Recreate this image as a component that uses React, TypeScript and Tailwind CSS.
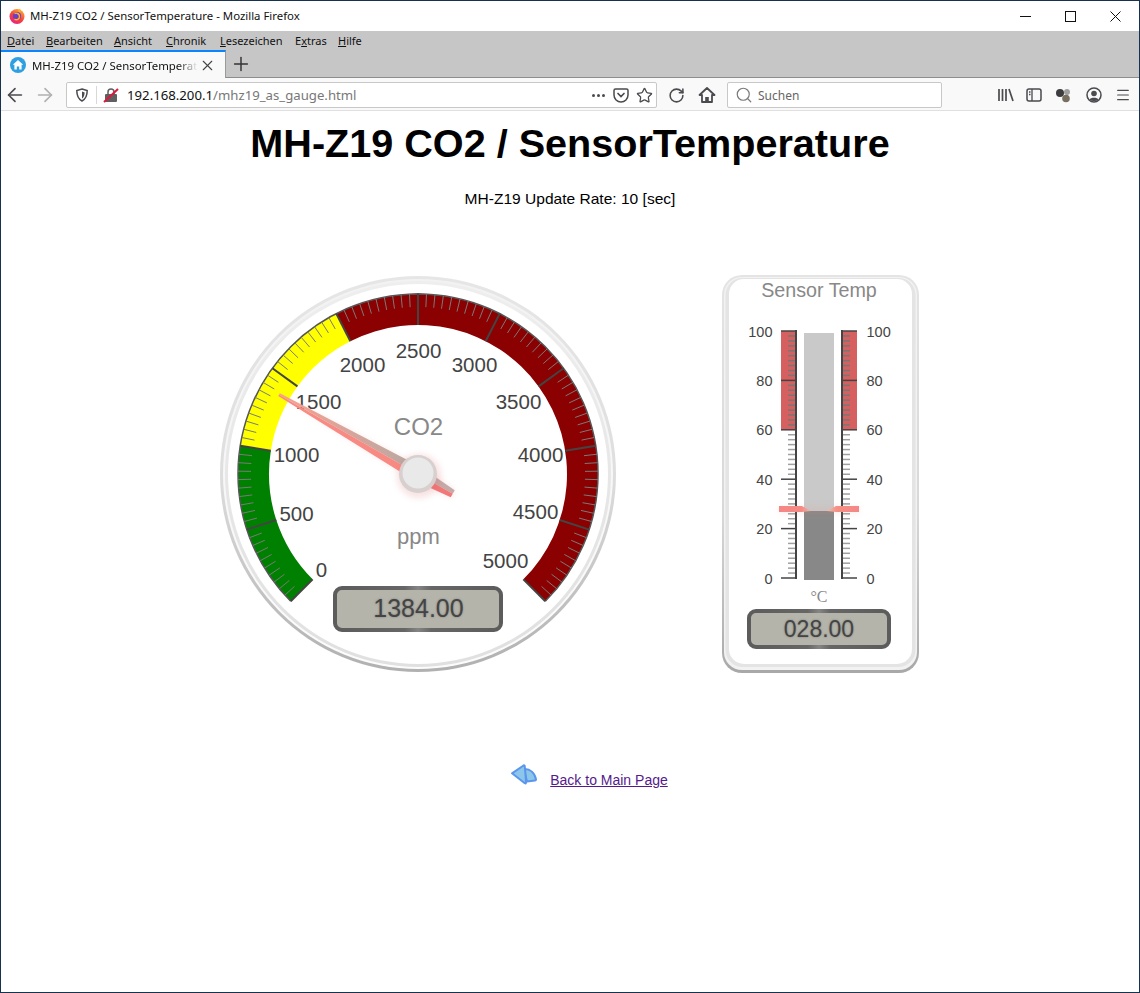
import React from "react";
import { ArrowLeft, ArrowRight, RotateCw, Search, Star, X, Plus, Menu } from "lucide-react";

const SANS = "Liberation Sans, Arial, sans-serif";
const CX = 418;
const CY = 474;

function polar(value: number, r: number) {
  const a = ((45 + (value / 5000) * 270) * Math.PI) / 180;
  return [CX - r * Math.sin(a), CY + r * Math.cos(a)];
}

function arc(from: number, to: number, r1: number, r2: number) {
  const [ax, ay] = polar(from, r1);
  const [bx, by] = polar(to, r1);
  const [cx, cy] = polar(to, r2);
  const [dx, dy] = polar(from, r2);
  const large = ((to - from) / 5000) * 270 > 180 ? 1 : 0;
  return `M${ax} ${ay}A${r1} ${r1} 0 ${large} 1 ${bx} ${by}L${cx} ${cy}A${r2} ${r2} 0 ${large} 0 ${dx} ${dy}Z`;
}

const labels: [string, number, number][] = [
  ["0", 321.5, 570],
  ["500", 296.5, 514],
  ["1000", 296.5, 454.5],
  ["1500", 318.5, 401.5],
  ["2000", 362.5, 364.5],
  ["2500", 418.5, 350.5],
  ["3000", 474.5, 364.5],
  ["3500", 518.5, 401.5],
  ["4000", 540.5, 454.5],
  ["4500", 535.5, 511.5],
  ["5000", 505.5, 560.5],
];

function Gauge() {
  const ticks = Array.from({ length: 101 }, (_, i) => i * 50);
  const a = ((45 + (1384 / 5000) * 270) * Math.PI) / 180;
  const ux = -Math.sin(a);
  const uy = Math.cos(a);
  const nx = -uy;
  const ny = ux;
  const pt = (along: number, side: number) =>
    `${CX + ux * along + nx * side},${CY + uy * along + ny * side}`;
  return (
    <svg width={400} height={400} viewBox="218 274 400 400" fontFamily={SANS} className="block shrink-0">
      <defs>
        <linearGradient id="ringA" x1="0" y1="0" x2="0" y2="1">
          <stop offset="0" stopColor="#e6e6e6" />
          <stop offset="0.5" stopColor="#dedede" />
          <stop offset="1" stopColor="#b0b0b0" />
        </linearGradient>
        <linearGradient id="ringB" x1="0" y1="0" x2="0" y2="1">
          <stop offset="0" stopColor="#f2f2f2" />
          <stop offset="1" stopColor="#fcfcfc" />
        </linearGradient>
        <linearGradient id="ringC" x1="0" y1="0" x2="0" y2="1">
          <stop offset="0" stopColor="#eeeeee" />
          <stop offset="1" stopColor="#e0e0e0" />
        </linearGradient>
        <linearGradient id="needleTop" x1="279" y1="396" x2="405" y2="460" gradientUnits="userSpaceOnUse">
          <stop offset="0" stopColor="#f8a090" />
          <stop offset="1" stopColor="#bca9a2" />
        </linearGradient>
        <linearGradient id="lcdFrame" x1="0" y1="0" x2="1" y2="0">
          <stop offset="0" stopColor="#5c5c5c" />
          <stop offset="0.42" stopColor="#666666" />
          <stop offset="0.5" stopColor="#858585" />
          <stop offset="0.58" stopColor="#666666" />
          <stop offset="1" stopColor="#5c5c5c" />
        </linearGradient>
        <filter id="soft" x="-30%" y="-30%" width="160%" height="160%">
          <feGaussianBlur stdDeviation="3" />
        </filter>
        <filter id="softRing" x="-5%" y="-5%" width="110%" height="110%">
          <feGaussianBlur stdDeviation="0.7" />
        </filter>
        <filter id="softText" x="-10%" y="-30%" width="120%" height="160%">
          <feGaussianBlur stdDeviation="1.2" />
        </filter>
      </defs>
      <circle cx={CX} cy={CY} r={198} fill="url(#ringA)" filter="url(#softRing)" />
      <circle cx={CX} cy={CY} r={195} fill="url(#ringB)" filter="url(#softRing)" />
      <circle cx={CX} cy={CY} r={193} fill="url(#ringC)" filter="url(#softRing)" />
      <circle cx={CX} cy={CY} r={190} fill="#ffffff" filter="url(#softRing)" />
      <path d={arc(0, 1000, 180, 149)} fill="#008000" />
      <path d={arc(1000, 2000, 180, 149)} fill="#ffff00" />
      <path d={arc(2000, 5000, 180, 149)} fill="#8b0000" />
      <path d={arc(0, 5000, 180, 180)} fill="none" stroke="#555555" strokeWidth={1.5} />
      {ticks.map((v) => {
        const major = v % 500 === 0;
        const [x1, y1] = polar(v, 180);
        const [x2, y2] = polar(v, major ? 149 : 167);
        return (
          <line
            key={v}
            x1={x1}
            y1={y1}
            x2={x2}
            y2={y2}
            stroke={major ? "#444444" : "#7a7a7a"}
            strokeWidth={major ? 2 : 1}
          />
        );
      })}
      {labels.map(([t, x, y]) => (
        <text key={t} x={x} y={y + 7} textAnchor="middle" fontSize={20.5} fill="#444444">
          {t}
        </text>
      ))}
      <text x={418.5} y={435} textAnchor="middle" fontSize={24} fill="#888888">
        CO2
      </text>
      <text x={418.5} y={543.5} textAnchor="middle" fontSize={22} fill="#888888">
        ppm
      </text>
      <polygon
        points={`${pt(150, 0)} ${pt(0, -7)} ${pt(-40, -4)} ${pt(-40, 4)} ${pt(0, 7)}`}
        fill="#ee6666"
        opacity={0.18}
        filter="url(#soft)"
      />
      <polygon points={`${pt(160, 1.6)} ${pt(0, 7.5)} ${pt(0, 0)} ${pt(160, 0)}`} fill="url(#needleTop)" />
      <polygon points={`${pt(160, -1.6)} ${pt(0, -7.5)} ${pt(0, 0)} ${pt(160, 0)}`} fill="#f88a84" />
      <polygon points={`${pt(0, 7.5)} ${pt(-40, 4)} ${pt(-40, 0)} ${pt(0, 0)}`} fill="#c4aaa8" />
      <polygon points={`${pt(0, -7.5)} ${pt(-40, -4)} ${pt(-40, 0)} ${pt(0, 0)}`} fill="#f07878" />
      <circle cx={CX + 1} cy={CY + 2} r={22} fill="#d86060" opacity={0.18} filter="url(#soft)" />
      <circle cx={CX} cy={CY} r={19} fill="#d8cfcf" />
      <circle cx={CX} cy={CY - 1} r={15.5} fill="#e9e9e9" />
      <rect x={335} y={588} width={166} height={42} rx={7} fill="#b4b4ab" stroke="url(#lcdFrame)" strokeWidth={4} />
      <text x={418.5} y={617} textAnchor="middle" fontSize={25} fill="#444444" opacity={0.45} filter="url(#softText)">
        1384.00
      </text>
      <text x={418.5} y={617} textAnchor="middle" fontSize={25} fill="#444444">
        1384.00
      </text>
    </svg>
  );
}

function Thermometer() {
  const Y = (v: number) => 578 - v * 2.47;
  const ticks = Array.from({ length: 51 }, (_, i) => i * 2);
  const majors = [0, 20, 40, 60, 80, 100];
  return (
    <svg width={198} height={400} viewBox="722 274 198 400" fontFamily={SANS} className="block shrink-0">
      <defs>
        <linearGradient id="cardA" x1="0" y1="0" x2="0" y2="1">
          <stop offset="0" stopColor="#e4e4e4" />
          <stop offset="0.6" stopColor="#d8d8d8" />
          <stop offset="1" stopColor="#a8a8a8" />
        </linearGradient>
        <linearGradient id="tFrame" x1="0" y1="0" x2="1" y2="0">
          <stop offset="0" stopColor="#5c5c5c" />
          <stop offset="0.42" stopColor="#666666" />
          <stop offset="0.5" stopColor="#858585" />
          <stop offset="0.58" stopColor="#666666" />
          <stop offset="1" stopColor="#5c5c5c" />
        </linearGradient>
        <linearGradient id="pointerL" x1="0" y1="0" x2="1" y2="0">
          <stop offset="0" stopColor="#f58686" />
          <stop offset="0.7" stopColor="#f58a84" />
          <stop offset="1" stopColor="#e8b8a8" />
        </linearGradient>
        <linearGradient id="pointerR" x1="1" y1="0" x2="0" y2="0">
          <stop offset="0" stopColor="#f58686" />
          <stop offset="0.7" stopColor="#f59084" />
          <stop offset="1" stopColor="#f0c0b0" />
        </linearGradient>
        <filter id="tSoft" x="-30%" y="-200%" width="160%" height="500%">
          <feGaussianBlur stdDeviation="3" />
        </filter>
        <filter id="tRing" x="-5%" y="-5%" width="110%" height="110%">
          <feGaussianBlur stdDeviation="0.7" />
        </filter>
        <filter id="tText" x="-10%" y="-30%" width="120%" height="160%">
          <feGaussianBlur stdDeviation="1.2" />
        </filter>
      </defs>
      <rect x={722} y={275} width={197} height={398} rx={20} fill="url(#cardA)" filter="url(#tRing)" />
      <rect x={724} y={277} width={193} height={393} rx={18} fill="#f2f2f2" filter="url(#tRing)" />
      <rect x={725.5} y={278} width={190} height={389} rx={17} fill="#e4e4e4" filter="url(#tRing)" />
      <rect x={729} y={279} width={183} height={385} rx={15} fill="#ffffff" filter="url(#tRing)" />
      <text x={819} y={297} textAnchor="middle" fontSize={19.7} fill="#888888">
        Sensor Temp
      </text>
      <rect x={781} y={Y(100)} width={15} height={Y(60) - Y(100)} fill="#d66060" />
      <rect x={842} y={Y(100)} width={15} height={Y(60) - Y(100)} fill="#d66060" />
      {ticks.map((v) => {
        if (majors.includes(v)) return null;
        return (
          <g key={v} stroke={v > 60 ? "#777777" : "#a0a0a0"} strokeWidth={1.5}>
            <line x1={788} x2={796} y1={Y(v)} y2={Y(v)} />
            <line x1={842} x2={850} y1={Y(v)} y2={Y(v)} />
          </g>
        );
      })}
      {majors.map((v) => (
        <g key={v}>
          <line x1={781} x2={796} y1={Y(v)} y2={Y(v)} stroke="#444444" strokeWidth={1.5} />
          <line x1={842} x2={857} y1={Y(v)} y2={Y(v)} stroke="#444444" strokeWidth={1.5} />
          <text x={772.5} y={Y(v) + 5.5} textAnchor="end" fontSize={14.5} fill="#444444">
            {v}
          </text>
          <text x={866.5} y={Y(v) + 5.5} textAnchor="start" fontSize={14.5} fill="#444444">
            {v}
          </text>
        </g>
      ))}
      <line x1={796} x2={796} y1={Y(100) - 1} y2={Y(0) + 1} stroke="#444444" strokeWidth={2} />
      <line x1={842} x2={842} y1={Y(100) - 1} y2={Y(0) + 1} stroke="#444444" strokeWidth={2} />
      <rect x={804} y={333} width={30} height={178} fill="#c9c9c9" />
      <rect x={804} y={511} width={30} height={69} fill="#888888" />
      <rect x={779} y={506} width={80} height={8} fill="#f08080" opacity={0.12} filter="url(#tSoft)" />
      <polygon points="779,506 802,506 811,511 802,512 779,512" fill="url(#pointerL)" />
      <polygon points="859,506 836,506 827,511 836,512 859,512" fill="url(#pointerR)" />
      <text x={819} y={602} textAnchor="middle" fontSize={16} fill="#888888" fontFamily="Liberation Serif, serif">
        °C
      </text>
      <rect x={749} y={611} width={140} height={36} rx={7} fill="#b4b4ab" stroke="url(#tFrame)" strokeWidth={4} />
      <text x={819} y={637} textAnchor="middle" fontSize={23} fill="#444444" opacity={0.45} filter="url(#tText)">
        028.00
      </text>
      <text x={819} y={637} textAnchor="middle" fontSize={23} fill="#444444">
        028.00
      </text>
    </svg>
  );
}

function FirefoxLogo() {
  return (
    <svg width={16} height={16} viewBox="0 0 16 16" className="shrink-0">
      <defs>
        <linearGradient id="ff" x1="0.8" y1="0" x2="0.2" y2="1">
          <stop offset="0" stopColor="#ffb02e" />
          <stop offset="0.55" stopColor="#f5413c" />
          <stop offset="1" stopColor="#e3218f" />
        </linearGradient>
      </defs>
      <circle cx="8" cy="8.5" r="7.5" fill="url(#ff)" />
      <path d="M11 .5c.8 2 .6 3.3 0 4.3L9 3z" fill="#ffb02e" />
      <circle cx="8" cy="8" r="4" fill="#6a3fc8" />
      <path d="M5.500 5.500c2-1 5 0 5 3s-3 4-5 2.600" fill="none" stroke="#ffb02e" strokeWidth="1.400" />
    </svg>
  );
}

function HomeFavicon() {
  return (
    <svg width={16} height={16} viewBox="0 0 16 16" className="shrink-0">
      <circle cx="8" cy="8" r="8" fill="#2f9fe0" />
      <path d="M8 3l5.200 4.700h-1.600V12.600H9.200V9.400H6.800v3.200H4.400V7.700H2.800z" fill="#ffffff" />
    </svg>
  );
}

function MenuBar() {
  return (
    <div className="flex h-[19px] items-center bg-[#c6c6c6] pl-[6px] pt-[1px] text-[11px] text-[#111]">
      <span className="w-[39px]">
        <span className="underline">D</span>atei
      </span>
      <span className="w-[68px]">
        <span className="underline">B</span>earbeiten
      </span>
      <span className="w-[52px]">
        <span className="underline">A</span>nsicht
      </span>
      <span className="w-[54px]">
        <span className="underline">C</span>hronik
      </span>
      <span className="w-[75px]">
        <span className="underline">L</span>esezeichen
      </span>
      <span className="w-[43px]">
        E<span className="underline">x</span>tras
      </span>
      <span>
        <span className="underline">H</span>ilfe
      </span>
    </div>
  );
}

function TitleBar() {
  return (
    <div className="flex h-[30px] items-center bg-white pl-2 text-[#111]">
      <FirefoxLogo />
      <span className="ml-[5px] whitespace-nowrap text-[11.4px]">MH-Z19 CO2 / SensorTemperature - Mozilla Firefox</span>
      <div className="ml-auto flex items-center">
        <div className="flex w-[45px] justify-center">
          <svg width={11} height={11} viewBox="0 0 11 11">
            <path d="M0 5.500H11" stroke="#111" strokeWidth="1" />
          </svg>
        </div>
        <div className="flex w-[45px] justify-center">
          <svg width={11} height={11} viewBox="0 0 11 11">
            <rect x=".5" y=".5" width="10" height="10" fill="none" stroke="#111" strokeWidth="1" />
          </svg>
        </div>
        <div className="flex w-[46px] justify-center pr-[1px]">
          <svg width={11} height={11} viewBox="0 0 11 11">
            <path d="M.5 .5L10.500 10.500M10.500 .5L.5 10.500" stroke="#111" strokeWidth="1" />
          </svg>
        </div>
      </div>
    </div>
  );
}

function TabBar() {
  return (
    <div className="flex h-[28px] items-stretch border-b border-[#8c8c8c] bg-[#c6c6c6]">
      <div className="-mb-px flex w-[225px] items-center gap-[6px] border-t-2 border-r border-t-[#0a84ff] border-r-[#9a9a9a] bg-[#f9f9fa] pl-[9px] pr-[9px]">
        <HomeFavicon />
        <span className="w-[169px] overflow-hidden whitespace-nowrap pt-[1px] text-[11.4px] text-[#111] [mask-image:linear-gradient(to_left,transparent,black_20px)]">
          MH-Z19 CO2 / SensorTemperature - Mozilla
        </span>
        <X size={17} strokeWidth={1.6} className="-ml-[5px] shrink-0 text-[#444]" />
      </div>
      <div className="flex w-[30px] items-center justify-center">
        <Plus size={22} strokeWidth={1.6} className="text-[#333]" />
      </div>
    </div>
  );
}

function Toolbar() {
  const ic = "#4a4a4f";
  return (
    <div className="flex h-[33px] items-center border-b border-[#e0e0e1] bg-[#f9f9fa] pl-[3px] pt-[2px]">
      <ArrowLeft size={22} strokeWidth={1.8} color={ic} className="shrink-0" />
      <ArrowRight size={22} strokeWidth={1.8} color="#b0b0b2" className="ml-[8px] shrink-0" />
      <div className="ml-[10px] flex h-[26px] w-[591px] shrink-0 items-center rounded-[2px] border border-[#c8c8c8] bg-white">
        <svg width={14} height={14} viewBox="0 0 14 14" className="ml-[8px] shrink-0">
          <path d="M7 1l5.200 1.600c0 4.600-1.200 8.400-5.200 10.400C3 11 1.800 7.200 1.800 2.600z" fill="none" stroke={ic} strokeWidth="1.500" />
          <path d="M7 3.600l2.600 .8C9.600 7 8.900 9.200 7 10.400z" fill={ic} />
        </svg>
        <div className="ml-[7px] h-[18px] w-px bg-[#d8d8d8]" />
        <svg width={16} height={16} viewBox="0 0 16 16" className="ml-[6px] shrink-0">
          <rect x="2" y="7" width="12" height="8" rx="1" fill="#5f5f62" />
          <path d="M5 7V5a3 3 0 016 0v2" fill="none" stroke="#5f5f62" strokeWidth="1.500" />
          <path d="M1 15L15 2" stroke="#e0173c" strokeWidth="2" />
        </svg>
        <span className="ml-[8px] whitespace-nowrap pt-[1px] text-[13.2px] text-[#111]">
          192.168.200.1<span className="text-[#777]">/mhz19_as_gauge.html</span>
        </span>
        <div className="ml-auto flex items-center pr-[3px]">
          <span className="flex gap-[2px]">
            <i className="h-[3px] w-[3px] rounded-full bg-[#4a4a4f]" />
            <i className="h-[3px] w-[3px] rounded-full bg-[#4a4a4f]" />
            <i className="h-[3px] w-[3px] rounded-full bg-[#4a4a4f]" />
          </span>
          <svg width={16} height={16} viewBox="0 0 16 16" className="ml-[8px]">
            <path d="M2.500 2h11A1.500 1.500 0 0115 3.500V8a7 7 0 01-14 0V3.500A1.500 1.500 0 012.500 2z" fill="none" stroke={ic} strokeWidth="1.500" />
            <path d="M5 6.500l3 3 3-3" fill="none" stroke={ic} strokeWidth="1.700" strokeLinecap="round" />
          </svg>
          <Star size={17} strokeWidth={1.8} color={ic} className="ml-[7px]" />
        </div>
      </div>
      <RotateCw size={17} strokeWidth={2.2} color={ic} className="ml-[11px] shrink-0" />
      <svg width={18} height={18} viewBox="0 0 18 18" className="ml-[13px] shrink-0">
        <path d="M9 2L1.500 9H4v7h10V9h2.500z" fill="none" stroke={ic} strokeWidth="1.800" strokeLinejoin="round" />
        <path d="M7.200 16v-5h3.600v5z" fill={ic} />
      </svg>
      <div className="ml-[11px] flex h-[26px] w-[215px] shrink-0 items-center rounded-[2px] border border-[#c8c8c8] bg-white pl-[7px] text-[12px] text-[#666]">
        <Search size={18} strokeWidth={1.6} color="#7a7a7a" className="shrink-0" />
        <span className="ml-[5px] pt-[1px]">Suchen</span>
      </div>
      <div className="ml-auto flex items-center gap-[11px] pr-[8px]">
        <svg width={18} height={16} viewBox="0 0 18 16">
          <path d="M2 2v12M5.500 2v12M9 2v12M12 2l4 12" stroke={ic} strokeWidth="1.700" fill="none" />
        </svg>
        <svg width={16} height={16} viewBox="0 0 16 16">
          <rect x="1" y="2" width="14" height="12" rx="2" fill="none" stroke={ic} strokeWidth="1.500" />
          <path d="M6 2v12M3 5h1.500M3 7.500h1.500" stroke={ic} strokeWidth="1.300" fill="none" />
        </svg>
        <svg width={18} height={16} viewBox="0 0 18 16" className="ml-[1px]">
          <circle cx="6" cy="6" r="4" fill="#3d3d40" />
          <circle cx="13" cy="5" r="3" fill="#a0a0a0" />
          <circle cx="12" cy="11.500" r="3.800" fill="#77705e" />
        </svg>
        <svg width={16} height={16} viewBox="0 0 16 16" className="ml-[3px]">
          <circle cx="8" cy="8" r="7" fill="none" stroke={ic} strokeWidth="1.500" />
          <circle cx="8" cy="6.500" r="2.800" fill={ic} />
          <path d="M3.500 12.500c1-2.400 8-2.400 9 0A6 6 0 018 14a6 6 0 01-4.500-1.500z" fill={ic} />
        </svg>
        <Menu size={16} strokeWidth={1.8} color={ic} className="ml-[2px]" />
      </div>
    </div>
  );
}

function BackIcon() {
  return (
    <svg width={28} height={22} viewBox="0 0 28 22" className="shrink-0">
      <path
        d="M14 5C20 4.500 25 9 26 15.500Q26 16.500 25 16.500L17 17.500z"
        fill="#8cc6e8"
        stroke="#5a96ee"
        strokeWidth="2"
        strokeLinejoin="round"
      />
      <path
        d="M2 9.300L13.500 1.500Q14.500 1 14.700 2Q15.600 10 16 18.500Q16 19.800 14.800 19.200z"
        fill="#8cc6e8"
        stroke="#5a96ee"
        strokeWidth="2"
        strokeLinejoin="round"
      />
    </svg>
  );
}

export default function App() {
  return (
    <div className="flex h-[993px] w-[1140px] flex-col overflow-hidden border border-[#17324f] bg-white font-['Noto_Sans',sans-serif]">
      <TitleBar />
      <MenuBar />
      <TabBar />
      <Toolbar />
      <main className="flex flex-col items-center font-['Liberation_Sans',Arial,sans-serif] text-black">
        <h1 className="mt-[9px] text-[39.6px] font-bold leading-[46px]">MH-Z19 CO2 / SensorTemperature</h1>
        <p className="mt-[24px] text-[15.55px] leading-[18px]">MH-Z19 Update Rate: 10 [sec]</p>
        <div className="mt-[66px] flex items-start gap-[104px] pr-[2px]">
          <Gauge />
          <Thermometer />
        </div>
        <div className="mt-[90px] flex items-start pl-[38px]">
          <BackIcon />
          <a href="#" className="ml-[12px] mt-[8px] text-[14px] leading-[16px] text-[#551a8b] underline">
            Back to Main Page
          </a>
        </div>
      </main>
    </div>
  );
}
